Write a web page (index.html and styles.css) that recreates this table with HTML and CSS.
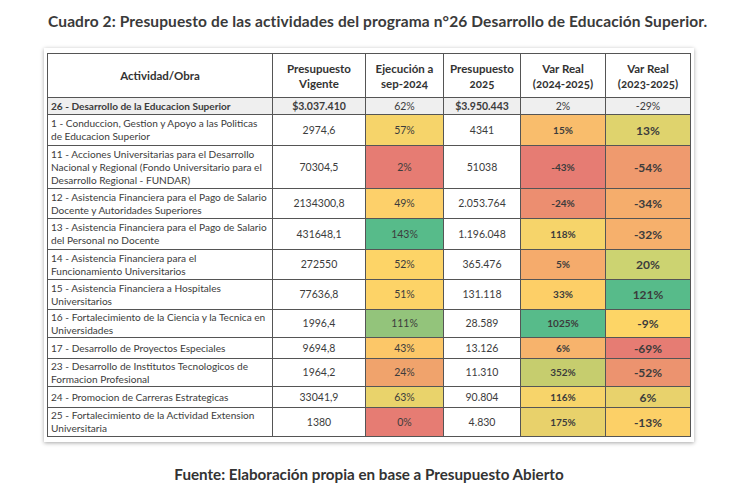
FILE: index.html
```html
<!DOCTYPE html>
<html lang="es">
<head>
<meta charset="utf-8">
<title>Cuadro 2</title>
<link rel="stylesheet" href="styles.css">
</head>
<body>
<div class="page">
  <h1 class="title">Cuadro 2: Presupuesto de las actividades del programa n°26 Desarrollo de Educación Superior.</h1>
  <div class="card">
    <table class="budget">
      <colgroup>
        <col class="c1"><col class="c2"><col class="c3"><col class="c4"><col class="c5"><col class="c6">
      </colgroup>
      <thead>
        <tr class="h44">
          <th>Actividad/Obra</th>
          <th>Presupuesto<br>Vigente</th>
          <th>Ejecución a<br>sep-2024</th>
          <th>Presupuesto<br>2025</th>
          <th>Var Real<br>(2024-2025)</th>
          <th>Var Real<br>(2023-2025)</th>
        </tr>
      </thead>
      <tbody>
        <tr class="total h17">
          <td class="label">26 - Desarrollo de la Educacion Superior</td>
          <td class="b">$3.037.410</td>
          <td>62%</td>
          <td class="b">$3.950.443</td>
          <td>2%</td>
          <td>-29%</td>
        </tr>
        <tr class="h31">
          <td class="label">1 - Conduccion, Gestion y Apoyo a las Politicas de Educacion Superior</td>
          <td>2974,6</td>
          <td class="e57">57%</td>
          <td>4341</td>
          <td class="v1 r15">15%</td>
          <td class="v2 s13">13%</td>
        </tr>
        <tr class="h43">
          <td class="label">11 - Acciones Universitarias para el Desarrollo Nacional y Regional (Fondo Universitario para el Desarrollo Regional - FUNDAR)</td>
          <td>70304,5</td>
          <td class="red">2%</td>
          <td>51038</td>
          <td class="v1 red">-43%</td>
          <td class="v2 s54">-54%</td>
        </tr>
        <tr class="h30">
          <td class="label">12 - Asistencia Financiera para el Pago de Salario Docente y Autoridades Superiores</td>
          <td>2134300,8</td>
          <td class="e49">49%</td>
          <td>2.053.764</td>
          <td class="v1 r24">-24%</td>
          <td class="v2 s34">-34%</td>
        </tr>
        <tr class="h31">
          <td class="label">13 - Asistencia Financiera para el Pago de Salario del Personal no Docente</td>
          <td>431648,1</td>
          <td class="green">143%</td>
          <td>1.196.048</td>
          <td class="v1 r118">118%</td>
          <td class="v2 s32">-32%</td>
        </tr>
        <tr class="h30">
          <td class="label">14 - Asistencia Financiera para el Funcionamiento Universitarios</td>
          <td>272550</td>
          <td class="e52">52%</td>
          <td>365.476</td>
          <td class="v1 r5">5%</td>
          <td class="v2 s20">20%</td>
        </tr>
        <tr class="h30">
          <td class="label">15 - Asistencia Financiera a Hospitales Universitarios</td>
          <td>77636,8</td>
          <td class="e51">51%</td>
          <td>131.118</td>
          <td class="v1 r33">33%</td>
          <td class="v2 green">121%</td>
        </tr>
        <tr class="h28">
          <td class="label">16 - Fortalecimiento de la Ciencia y la Tecnica en Universidades</td>
          <td>1996,4</td>
          <td class="e111">111%</td>
          <td>28.589</td>
          <td class="v1 green">1025%</td>
          <td class="v2 s9">-9%</td>
        </tr>
        <tr class="h21">
          <td class="label">17 - Desarrollo de Proyectos Especiales</td>
          <td>9694,8</td>
          <td class="e43">43%</td>
          <td>13.126</td>
          <td class="v1 r6">6%</td>
          <td class="v2 red">-69%</td>
        </tr>
        <tr class="h28">
          <td class="label">23 - Desarrollo de Institutos Tecnologicos de Formacion Profesional</td>
          <td>1964,2</td>
          <td class="e24">24%</td>
          <td>11.310</td>
          <td class="v1 r352">352%</td>
          <td class="v2 s52">-52%</td>
        </tr>
        <tr class="h21">
          <td class="label">24 - Promocion de Carreras Estrategicas</td>
          <td>33041,9</td>
          <td class="e63">63%</td>
          <td>90.804</td>
          <td class="v1 r116">116%</td>
          <td class="v2 s6">6%</td>
        </tr>
        <tr class="h29">
          <td class="label">25 - Fortalecimiento de la Actividad Extension Universitaria</td>
          <td>1380</td>
          <td class="red">0%</td>
          <td>4.830</td>
          <td class="v1 r175">175%</td>
          <td class="v2 s13n">-13%</td>
        </tr>
      </tbody>
    </table>
  </div>
  <p class="source">Fuente: Elaboración propia en base a Presupuesto Abierto</p>
</div>
</body>
</html>
```

FILE: styles.css
```css
* { box-sizing: border-box; }
html, body { margin: 0; padding: 0; background: #ffffff; }
body { font-family: "Lato", "Liberation Sans", sans-serif; color: #333; }

.page { width: 750px; height: 495px; padding-top: 11px; }

.title {
  margin: 0 0 0 48px;
  font-family: "Lato", sans-serif;
  font-weight: 700;
  font-size: 15.5px;
  line-height: 20px;
  color: #3a3a3a;
  letter-spacing: 0.12px;
  white-space: nowrap;
}

.card {
  margin: 17px 0 0 44px;
  width: 650px;
  padding: 5px 4px 5px 3px;
  background: #fff;
  box-shadow: 0 1px 4px rgba(0,0,0,0.35);
}

.budget {
  border-collapse: collapse;
  table-layout: fixed;
  width: 643px;
  font-size: 10.5px;
  color: #3c3c3c;
}
.c1 { width: 225px; }
.c2 { width: 93px; }
.c3 { width: 78px; }
.c4 { width: 77px; }
.c5 { width: 85px; }
.c6 { width: 85px; }

.budget th, .budget td {
  border: 1px solid #555;
  text-align: center;
  vertical-align: middle;
  padding: 0 3px;
  line-height: 13px;
}
.budget th {
  font-weight: 700;
  font-size: 11.5px;
  line-height: 15px;
  color: #333;
  font-variant-numeric: oldstyle-nums;
}
.budget td.label { text-align: left; padding: 0 4px 0 3px; font-size: 10.1px; }

.h44 { height: 44px; }
.h43 { height: 43px; }
.h31 { height: 31px; }
.h30 { height: 30px; }
.h29 { height: 29px; }
.h28 { height: 28px; }
.h21 { height: 21px; }
.h17 { height: 17px; }

.total td { background: #efefef; }
.total td.label, .total td.b { font-weight: 700; }

.v1 { font-weight: 700; font-size: 10px; }
.v2 { font-weight: 700; font-size: 12px; }

.red { background: #e67c73; }
.green { background: #57bb8a; }

.e57 { background: #f6d46a; }
.e49 { background: #fdd06a; }
.e52 { background: #fdd467; }
.e51 { background: #fdd367; }
.e111 { background: #93c47b; }
.e43 { background: #fcc768; }
.e24 { background: #f0a36c; }
.e63 { background: #e9d36b; }

.r15 { background: #f9bd6c; }
.r24 { background: #ec8e70; }
.r118 { background: #f6d46a; }
.r5 { background: #f5ab6c; }
.r33 { background: #fdcf67; }
.r6 { background: #f7b36c; }
.r352 { background: #c6cd6e; }
.r116 { background: #f7d46a; }
.r175 { background: #e8d16b; }

.s13 { background: #dfd36d; }
.s54 { background: #ef9a6e; }
.s34 { background: #f5ad6c; }
.s32 { background: #f6b06c; }
.s20 { background: #ccd371; }
.s9 { background: #fdd566; }
.s52 { background: #ec936f; }
.s6 { background: #e8d26c; }
.s13n { background: #fcd067; }

.source {
  margin: 22px 0 0 0;
  width: 738px;
  text-align: center;
  font-family: "Lato", sans-serif;
  font-weight: 700;
  font-size: 15.2px;
  line-height: 20px;
  color: #333;
}
```
